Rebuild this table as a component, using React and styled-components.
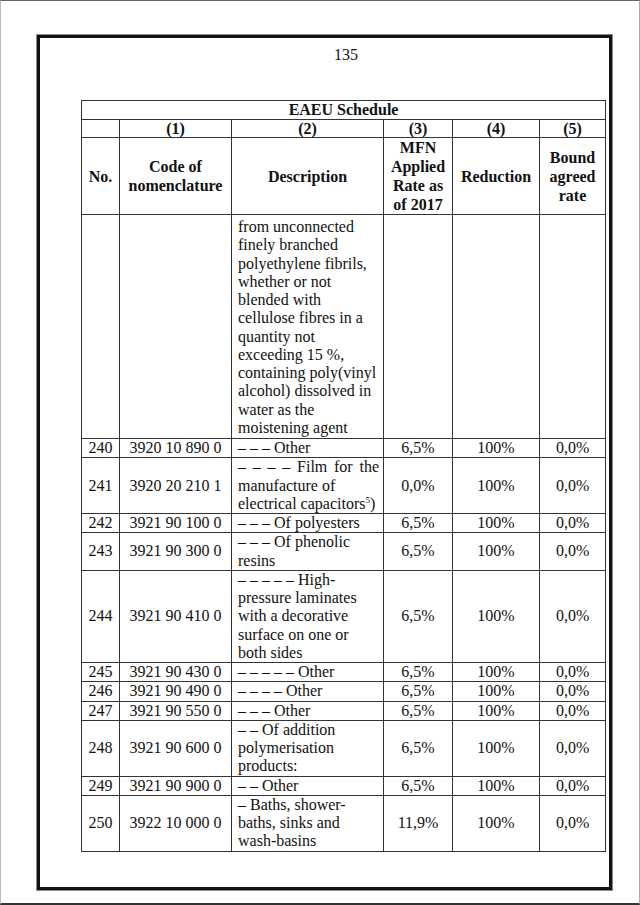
import styled, { createGlobalStyle } from "styled-components";

const Global = createGlobalStyle`
  html, body {
    margin: 0;
    padding: 0;
    background: #fff;
  }
  body {
    font-family: "Liberation Serif", "Times New Roman", serif;
    color: #111;
  }
`;

const Sheet = styled.div`
  width: 640px;
  height: 905px;
  box-sizing: border-box;
  border-top: 1px solid #666;
  border-left: 1px solid #bbb;
  border-right: 1px solid #aaa;
  border-bottom: 2px solid #333;
  padding: 34px 0 0 36px;
  overflow: hidden;
`;

const Frame = styled.div`
  width: 575px;
  height: 855px;
  box-sizing: border-box;
  border: 3px solid #111;
  box-shadow: 0 0 0 1px #8a8a8a;
  padding: 8px 0 0 41px;
`;

const PageNo = styled.div`
  width: 524px;
  text-align: center;
  font-family: "Liberation Serif", "Times New Roman", serif;
  font-size: 16px;
  line-height: 18px;
  padding-left: 6px;
  box-sizing: border-box;
  margin-bottom: 36px;
`;

const Table = styled.table`
  width: 524px;
  border-collapse: collapse;
  table-layout: fixed;
  font-family: "Liberation Serif", "Times New Roman", serif;
  font-size: 16px;
  line-height: 18.25px;
  color: #111;
`;

const Th = styled.th`
  border: 1px solid #333;
  padding: 0;
  font-weight: bold;
  text-align: center;
  vertical-align: middle;
  line-height: ${(p) => (p.$tall ? "19px" : "17.5px")};
`;

const Td = styled.td`
  border: 1px solid #333;
  padding: ${(p) => (p.$top ? "3px 0 1px" : "0")};
  text-align: center;
  vertical-align: ${(p) => (p.$top ? "top" : "middle")};
  white-space: nowrap;
`;

const DescCell = styled(Td)`
  text-align: left;
  padding-left: 6px;
  padding-right: 4px;
`;

const Line = styled.span`
  display: block;
  text-align: ${(p) => (p.$justify ? "justify" : "left")};
  text-align-last: ${(p) => (p.$justify ? "justify" : "left")};
`;

const Sup = styled.sup`
  font-size: 9px;
  line-height: 0;
  vertical-align: 6px;
`;

const d = (n) => Array(n).fill("\u2013").join(" ");

const rows = [
  {
    no: "",
    code: "",
    top: true,
    desc: [
      "from unconnected",
      "finely branched",
      "polyethylene fibrils,",
      "whether or not",
      "blended with",
      "cellulose fibres in a",
      "quantity not",
      "exceeding 15 %,",
      "containing poly(vinyl",
      "alcohol) dissolved in",
      "water as the",
      "moistening agent",
    ],
    mfn: "",
    red: "",
    bound: "",
  },
  { no: "240", code: "3920 10 890 0", desc: [`${d(3)} Other`], mfn: "6,5%", red: "100%", bound: "0,0%" },
  {
    no: "241",
    code: "3920 20 210 1",
    desc: [{ t: `${d(4)} Film for the`, j: true }, "manufacture of", "capacitors"],
    mfn: "0,0%",
    red: "100%",
    bound: "0,0%",
  },
  { no: "242", code: "3921 90 100 0", desc: [`${d(3)} Of polyesters`], mfn: "6,5%", red: "100%", bound: "0,0%" },
  {
    no: "243",
    code: "3921 90 300 0",
    desc: [`${d(3)}  Of phenolic`, "resins"],
    mfn: "6,5%",
    red: "100%",
    bound: "0,0%",
  },
  {
    no: "244",
    code: "3921 90 410 0",
    desc: [`${d(5)} High-`, "pressure laminates", "with a decorative", "surface on one or", "both sides"],
    mfn: "6,5%",
    red: "100%",
    bound: "0,0%",
  },
  { no: "245", code: "3921 90 430 0", desc: [`${d(5)} Other`], mfn: "6,5%", red: "100%", bound: "0,0%" },
  { no: "246", code: "3921 90 490 0", desc: [`${d(4)} Other`], mfn: "6,5%", red: "100%", bound: "0,0%" },
  { no: "247", code: "3921 90 550 0", desc: [`${d(3)} Other`], mfn: "6,5%", red: "100%", bound: "0,0%" },
  {
    no: "248",
    code: "3921 90 600 0",
    desc: [`${d(2)} Of addition`, "polymerisation", "products:"],
    mfn: "6,5%",
    red: "100%",
    bound: "0,0%",
  },
  { no: "249", code: "3921 90 900 0", desc: [`${d(2)} Other`], mfn: "6,5%", red: "100%", bound: "0,0%" },
  {
    no: "250",
    code: "3922 10 000 0",
    desc: [`${d(1)} Baths, shower-`, "baths, sinks and", "wash-basins"],
    mfn: "11,9%",
    red: "100%",
    bound: "0,0%",
  },
];

const renderLine = (row, line, i) => {
  const text = typeof line === "string" ? line : line.t;
  const justify = typeof line === "object" && line.j;
  if (row.no === "241" && i === 2) {
    return (
      <Line key={i}>
        electrical capacitors<Sup>5</Sup>)
      </Line>
    );
  }
  return (
    <Line key={i} $justify={justify}>
      {text}
    </Line>
  );
};

const App = () => {
  return (
    <Sheet>
      <Global />
      <Frame>
        <PageNo>135</PageNo>
        <Table>
          <colgroup>
            <col style={{ width: 38 }} />
            <col style={{ width: 112 }} />
            <col style={{ width: 152 }} />
            <col style={{ width: 69 }} />
            <col style={{ width: 87 }} />
            <col style={{ width: 66 }} />
          </colgroup>
          <thead>
            <tr>
              <Th colSpan={6}>EAEU Schedule</Th>
            </tr>
            <tr>
              <Th />
              <Th>(1)</Th>
              <Th>(2)</Th>
              <Th>(3)</Th>
              <Th>(4)</Th>
              <Th>(5)</Th>
            </tr>
            <tr>
              <Th $tall>No.</Th>
              <Th $tall>
                Code of
                <br />
                nomenclature
              </Th>
              <Th $tall>Description</Th>
              <Th $tall>
                MFN
                <br />
                Applied
                <br />
                Rate as
                <br />
                of 2017
              </Th>
              <Th $tall>Reduction</Th>
              <Th $tall>
                Bound
                <br />
                agreed
                <br />
                rate
              </Th>
            </tr>
          </thead>
          <tbody>
            {rows.map((row, idx) => (
              <tr key={idx}>
                <Td $top={row.top}>{row.no}</Td>
                <Td $top={row.top}>{row.code}</Td>
                <DescCell $top={row.top}>{row.desc.map((l, i) => renderLine(row, l, i))}</DescCell>
                <Td $top={row.top}>{row.mfn}</Td>
                <Td $top={row.top}>{row.red}</Td>
                <Td $top={row.top}>{row.bound}</Td>
              </tr>
            ))}
          </tbody>
        </Table>
      </Frame>
    </Sheet>
  );
};

export default App;
